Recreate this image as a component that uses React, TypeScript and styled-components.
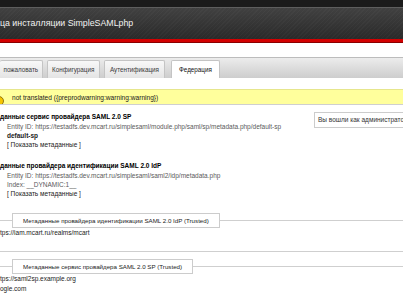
import styled, { createGlobalStyle } from "styled-components";

const GlobalStyle = createGlobalStyle`
  html, body {
    margin: 0;
    padding: 0;
    background: #ffffff;
    overflow: hidden;
  }
  body {
    font-family: "Liberation Sans", Arial, sans-serif;
    font-size: 6.5px;
    color: #000;
  }
`;

const Page = styled.div`
  width: 403px;
  height: 294px;
  overflow: hidden;
`;

const TopStrip = styled.div`
  height: 7px;
  background: #1b1b1b;
  border-bottom: 1px solid #5e5e5e;
`;

const HeaderBar = styled.div`
  height: 31px;
  background: repeating-linear-gradient(
      135deg,
      rgba(255, 255, 255, 0.025) 0 1px,
      rgba(0, 0, 0, 0) 1px 3px
    ),
    linear-gradient(#414141, #2a2a2a);
  color: #f2f2f2;
  font-size: 8.8px;
  line-height: 31px;
  white-space: nowrap;
`;

const RedLine = styled.div`
  height: 3px;
  background: #d30000;
  border-bottom: 1px solid #8a0000;
`;

const TabBar = styled.div`
  margin-top: 14px;
  height: 20px;
  border-top: 1px solid #bcbcbc;
  background: linear-gradient(#ececec, #cdcdcd);
  display: flex;
  align-items: flex-end;
  gap: 4px;
`;

const Tab = styled.div<{ $active?: boolean; $pad: number }>`
  height: 17px;
  line-height: 17px;
  padding: 0 ${(p) => p.$pad}px;
  border: 1px solid #c4c4c4;
  border-bottom: none;
  border-radius: 2px 2px 0 0;
  background: ${(p) =>
    p.$active ? "#ffffff" : "linear-gradient(#f8f8f8, #e4e4e4)"};
  color: ${(p) => (p.$active ? "#111" : "#3a3a3a")};
  font-size: 6.3px;
  white-space: nowrap;
  margin-left: ${(p) => (p.$active ? "2px" : "0")};
  &:first-child {
    border-left: none;
  }
`;

const Warning = styled.div`
  margin-top: 11px;
  height: 14px;
  background: #ffff9c;
  border-top: 1px solid #e6e68c;
  border-bottom: 1px solid #cfcfcf;
  display: flex;
  align-items: center;
  gap: 8px;
  font-size: 6.6px;
  color: #1a1a1a;
  overflow: hidden;
`;

const WarnIcon = styled.svg`
  flex: none;
  margin-left: -6px;
  margin-top: 8px;
`;

const Content = styled.div`
  padding-top: 7px;
`;

/* the login box runs past the right edge, as in the screenshot */
const LoginBox = styled.div`
  float: right;
  margin: 0 -12px 0 0;
  width: 96px;
  height: 14px;
  line-height: 14px;
  border: 1px solid #cccccc;
  padding-left: 3px;
  white-space: nowrap;
  color: #333;
  font-size: 6.5px;
`;

const Section = styled.div<{ $gap: number }>`
  margin-bottom: ${(p) => p.$gap}px;
  line-height: 9px;
`;

const Heading = styled.div`
  font-weight: bold;
  margin-bottom: 1px;
`;

const Row = styled.div<{ $bold?: boolean; $muted?: boolean }>`
  padding-left: 7px;
  font-weight: ${(p) => (p.$bold ? "bold" : "normal")};
  color: ${(p) => (p.$muted ? "#5a5a5a" : "#222")};
  white-space: nowrap;
`;

const Fieldset = styled.fieldset`
  margin: 0;
  padding: 0 0 13px;
  border: none;
  border-top: 1px solid #cfcfcf;
  border-bottom: 1px solid #cfcfcf;
  line-height: 10px;
  & + & {
    margin-top: 7px;
    border-bottom: none;
  }
`;

const Legend = styled.legend`
  margin-left: 12px;
  padding: 0 10px;
  height: 13px;
  line-height: 13px;
  border: 1px solid #cccccc;
  color: #222;
  font-size: 6.2px;
  background: #fff;
  white-space: nowrap;
`;

const Entry = styled.div`
  color: #222;
  white-space: nowrap;
`;

export default function App() {
  return (
    <Page>
      <GlobalStyle />
      <TopStrip />
      <HeaderBar>ца инсталляции SimpleSAMLphp</HeaderBar>
      <RedLine />
      <TabBar>
        <Tab $pad={3.5}>пожаловать</Tab>
        <Tab $pad={4.5}>Конфигурация</Tab>
        <Tab $pad={5}>Аутентификация</Tab>
        <Tab $pad={7} $active>
          Федерация
        </Tab>
      </TabBar>
      <Warning>
        <WarnIcon width="10" height="10" viewBox="0 0 10 10">
          <circle cx="5" cy="5" r="4.5" fill="#f5c400" stroke="#7a5a00" strokeWidth="0.8" />
        </WarnIcon>
        not translated ({"{"}preprodwarning:warning:warning{"}"})
      </Warning>
      <Content>
        <LoginBox>Вы вошли как администратор</LoginBox>
        <Section $gap={12}>
          <Heading>данные сервис провайдера SAML 2.0 SP</Heading>
          <Row $muted>
            Entity ID: https://testadfs.dev.mcart.ru/simplesaml/module.php/saml/sp/metadata.php/default-sp
          </Row>
          <Row $bold>default-sp</Row>
          <Row>[ Показать метаданные ]</Row>
        </Section>
        <Section $gap={15}>
          <Heading>данные провайдера идентификации SAML 2.0 IdP</Heading>
          <Row $muted>Entity ID: https://testadfs.dev.mcart.ru/simplesaml/saml2/idp/metadata.php</Row>
          <Row $muted>Index: __DYNAMIC:1__</Row>
          <Row>[ Показать метаданные ]</Row>
        </Section>
        <Fieldset>
          <Legend>Метаданные провайдера идентификации SAML 2.0 IdP (Trusted)</Legend>
          <Entry>tps://iam.mcart.ru/realms/mcart</Entry>
        </Fieldset>
        <Fieldset>
          <Legend>Метаданные сервис провайдера SAML 2.0 SP (Trusted)</Legend>
          <Entry>tps://saml2sp.example.org</Entry>
          <Entry>ogle.com</Entry>
        </Fieldset>
      </Content>
    </Page>
  );
}
